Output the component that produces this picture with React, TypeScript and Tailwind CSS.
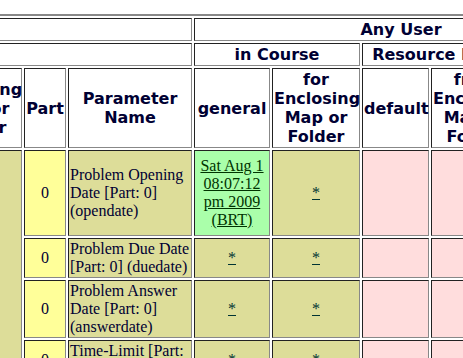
const inset = "border border-t-[#222] border-l-[#222] border-r-[#888] border-b-[#888]";
const th = `${inset} p-px text-center align-middle font-['DejaVu_Sans',sans-serif] text-[16px] font-bold leading-[19px] text-[#000033]`;
const td = `${inset} p-px align-middle`;

type Row = {
  part: string;
  name: string[];
  date?: string[];
};

const rows: Row[] = [
  {
    part: "0",
    name: ["Problem Opening Date [Part: 0] (opendate)"],
    date: ["Sat Aug 1", "08:07:12", "pm 2009", "(BRT)"],
  },
  { part: "0", name: ["Problem Due Date [Part: 0] (duedate)"] },
  { part: "0", name: ["Problem Answer Date [Part: 0] (answerdate)"] },
  { part: "0", name: ["Time-Limit [Part: 0] (interval)"] },
];

function Star() {
  return (
    <a href="#" className="text-[#003333] underline">
      *
    </a>
  );
}

export default function App() {
  return (
    <div className="h-[358px] w-[463px] overflow-hidden bg-white pt-[14px]">
      <table className="ml-[-70px] w-[682px] table-fixed border-separate border-spacing-[2px] border-2 border-t-[#888] border-l-[#888] border-r-[#333] border-b-[#333] font-['Liberation_Serif',serif] text-[16px] leading-[18px] text-[#000033]">
        <colgroup>
          <col className="w-[88px]" />
          <col className="w-[42px]" />
          <col className="w-[124px]" />
          <col className="w-[76px]" />
          <col className="w-[88px]" />
          <col className="w-[67px]" />
          <col className="w-[88px]" />
          <col className="w-[87px]" />
        </colgroup>
        <thead>
          <tr>
            <th colSpan={3} className={th}></th>
            <th colSpan={5} className={th}>
              Any User
            </th>
          </tr>
          <tr>
            <th colSpan={3} className={th}></th>
            <th colSpan={2} className={th}>
              in Course
            </th>
            <th colSpan={2} className={th}>
              Resource Level
            </th>
            <th className={th}>Section</th>
          </tr>
          <tr>
            <th className={th}>Enclosing Map or Folder</th>
            <th className={th}>Part</th>
            <th className={th}>Parameter Name</th>
            <th className={th}>general</th>
            <th className={th}>for Enclosing Map or Folder</th>
            <th className={th}>default</th>
            <th className={th}>from Enclosing Map or Folder</th>
            <th className={th}>in Course</th>
          </tr>
        </thead>
        <tbody>
          {rows.map((row, i) => (
            <tr key={i}>
              {i === 0 && <td rowSpan={rows.length} className={`${td} bg-[#dddd99]`}></td>}
              <td className={`${td} bg-[#ffff99] text-center`}>{row.part}</td>
              <td className={`${td} bg-[#dddd99]`}>{row.name}</td>
              {row.date ? (
                <td className={`${td} bg-[#aaffaa] py-[6px] text-center`}>
                  <a href="#" className="text-[#003300] underline">
                    {row.date.join(" ")}
                  </a>
                </td>
              ) : (
                <td className={`${td} bg-[#dddd99] text-center`}>
                  <Star />
                </td>
              )}
              <td className={`${td} bg-[#dddd99] text-center`}>
                <Star />
              </td>
              <td className={`${td} bg-[#ffdddd]`}></td>
              <td className={`${td} bg-[#ffdddd]`}></td>
              <td className={`${td} bg-[#ffdddd]`}></td>
            </tr>
          ))}
        </tbody>
      </table>
    </div>
  );
}
